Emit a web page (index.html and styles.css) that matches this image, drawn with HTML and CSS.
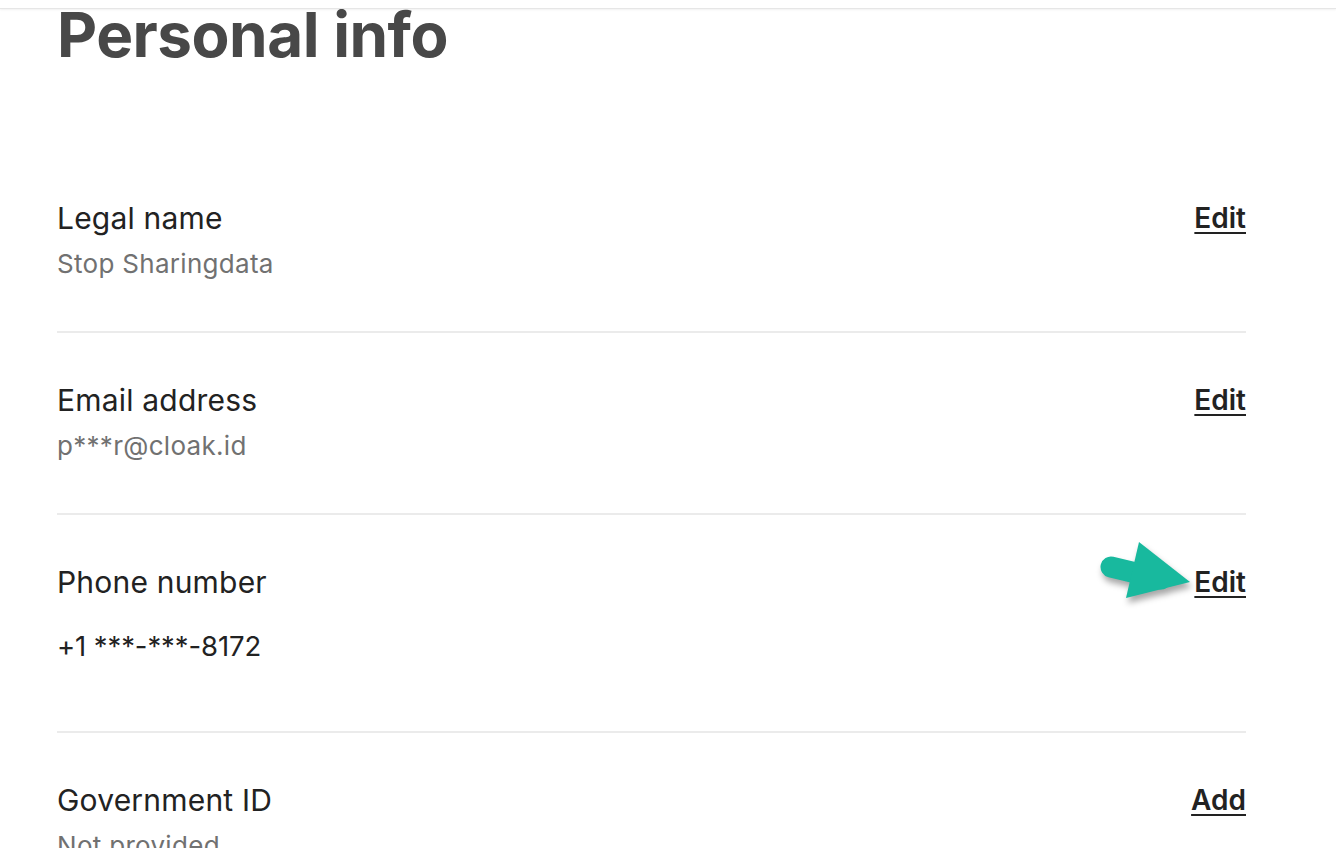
FILE: index.html
```html
<!DOCTYPE html>
<html lang="en">
<head>
<meta charset="utf-8">
<title>Personal info</title>
<link rel="stylesheet" href="styles.css">
</head>
<body>
<header class="topbar"></header>
<main class="page">
  <h1 class="title">Personal info</h1>
  <section class="list">
    <div class="row">
      <div class="row-main">
        <div class="label">Legal name</div>
        <div class="value">Stop Sharingdata</div>
      </div>
      <a class="action" href="#">Edit</a>
    </div>
    <div class="row">
      <div class="row-main">
        <div class="label">Email address</div>
        <div class="value">p***r@cloak.id</div>
      </div>
      <a class="action" href="#">Edit</a>
    </div>
    <div class="row row-phone">
      <div class="row-main">
        <div class="label">Phone number</div>
        <div class="value value-strong">+1 ***-***-8172</div>
      </div>
      <a class="action action-marked" href="#">Edit
        <svg class="pointer" width="100" height="70" viewBox="0 0 100 70" aria-hidden="true">
          <line x1="14" y1="29" x2="64" y2="41" stroke="#18b99e" stroke-width="21" stroke-linecap="round"/>
          <polygon points="42,4 93,44 29,60" fill="#18b99e"/>
        </svg>
      </a>
    </div>
    <div class="row row-last">
      <div class="row-main">
        <div class="label">Government ID</div>
        <div class="value">Not provided</div>
      </div>
      <a class="action" href="#">Add</a>
    </div>
  </section>
</main>
</body>
</html>
```

FILE: styles.css
```css
* { box-sizing: border-box; }

html, body {
  margin: 0;
  padding: 0;
  background: #ffffff;
  height: 100%;
  overflow: hidden;
}

body {
  font-family: "Inter", "Noto Sans", "Liberation Sans", sans-serif;
  color: #222222;
}

.topbar {
  height: 9px;
  background: #ffffff;
  border-bottom: 1px solid #e6e6e6;
  box-shadow: 0 1px 2px rgba(0, 0, 0, 0.06);
}

.page {
  padding: 0 90px 0 57px;
}

.title {
  margin: -6px 0 0 0;
  font-size: 62px;
  line-height: 64px;
  font-weight: 700;
  color: #484848;
  letter-spacing: -0.5px;
}

.list {
  margin-top: 84px;
}

.row {
  display: flex;
  justify-content: space-between;
  align-items: flex-start;
  padding: 49px 0 51px;
  border-bottom: 2px solid #ebebeb;
}

.row-phone {
  padding-bottom: 67px;
}

.row-last {
  border-bottom: none;
}

.row-main {
  display: flex;
  flex-direction: column;
  gap: 12px;
}

.row-phone .row-main {
  gap: 28px;
}

.label {
  font-size: 30px;
  line-height: 36px;
  font-weight: 400;
  color: #222222;
  letter-spacing: 0.2px;
}

.value {
  font-size: 26px;
  line-height: 32px;
  color: #717171;
  letter-spacing: 0.3px;
}

.value-strong {
  font-size: 27.5px;
  line-height: 36px;
  color: #222222;
  letter-spacing: -0.1px;
}

.action {
  font-size: 28px;
  line-height: 36px;
  font-weight: 600;
  color: #222222;
  text-decoration: underline;
  text-underline-offset: 4px;
  text-decoration-thickness: 2px;
}

.action-marked {
  position: relative;
}

.pointer {
  position: absolute;
  left: -97px;
  top: -26px;
  filter: drop-shadow(2px 5px 3px rgba(0, 0, 0, 0.35));
}
```
